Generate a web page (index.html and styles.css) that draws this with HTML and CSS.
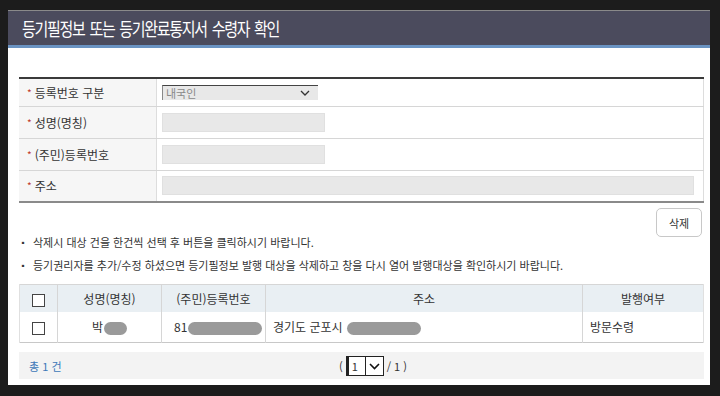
FILE: index.html
```html
<!DOCTYPE html>
<html lang="ko">
<head>
    <meta charset="UTF-8">
    <title>등기필정보 또는 등기완료통지서 수령자 확인</title>
    <link rel="stylesheet" href="styles.css">
</head>
<body>
<div class="popup">
    <header class="popup-title">
        <h1>등기필정보 또는 등기완료통지서 수령자 확인</h1>
    </header>

    <div class="popup-body">
        <table class="form-table">
            <tr>
                <th><span class="req">*</span>등록번호 구분</th>
                <td>
                    <div class="sel">
                        <span class="sel-text">내국인</span>
                        <svg width="10" height="6" viewBox="0 0 10 6"><path d="M1 1 L5 5 L9 1" fill="none" stroke="#333" stroke-width="1.3"/></svg>
                    </div>
                </td>
            </tr>
            <tr>
                <th><span class="req">*</span>성명(명칭)</th>
                <td><div class="field"></div></td>
            </tr>
            <tr>
                <th><span class="req">*</span>(주민)등록번호</th>
                <td><div class="field"></div></td>
            </tr>
            <tr>
                <th><span class="req">*</span>주소</th>
                <td><div class="field wide"></div></td>
            </tr>
        </table>

        <div class="btn-row">
            <button class="btn">삭제</button>
        </div>

        <ul class="notes">
            <li>삭제시 대상 건을 한건씩 선택 후 버튼을 클릭하시기 바랍니다.</li>
            <li>등기권리자를 추가/수정 하셨으면 등기필정보 발행 대상을 삭제하고 창을 다시 열어 발행대상을 확인하시기 바랍니다.</li>
        </ul>

        <table class="list-table">
            <colgroup>
                <col style="width:38px">
                <col style="width:104px">
                <col style="width:104px">
                <col style="width:317px">
                <col>
            </colgroup>
            <tr>
                <th class="c-chk"><span class="chk"></span></th>
                <th>성명(명칭)</th>
                <th>(주민)등록번호</th>
                <th>주소</th>
                <th>발행여부</th>
            </tr>
            <tr>
                <td class="c-chk"><span class="chk"></span></td>
                <td class="center">박<span class="blur" style="width:23px"></span></td>
                <td>81<span class="blur" style="width:74px"></span></td>
                <td class="tight">경기도 군포시 <span class="blur" style="width:74px"></span></td>
                <td class="tight">방문수령</td>
            </tr>
        </table>

        <div class="list-foot">
            <span class="total">총 1 건</span>
            <div class="pager">
                <span>(</span>
                <span class="page-sel"><span class="page-num">1</span><span class="page-arrow"><svg width="11" height="7" viewBox="0 0 11 7"><path d="M1 1 L5.5 5.5 L10 1" fill="none" stroke="#111" stroke-width="1.6"/></svg></span></span>
                <span>/ 1 )</span>
            </div>
        </div>
    </div>
</div>
</body>
</html>
```

FILE: styles.css
```css
body {
    margin: 0;
    background-color: #1c1c1c;
    font-family: "Noto Sans CJK KR", "Noto Sans", sans-serif;
    color: #333;
    height: 396px;
    overflow: hidden;
}
.popup {
    margin: 10px 0 0 8px;
    width: 702px;
    height: 375px;
    background-color: #fff;
    border-top: 1px solid #8a8a8a;
    box-sizing: border-box;
}
.popup-title {
    background-color: #4b4b5d;
    height: 34px;
    border-bottom: 3px solid #6a93c2;
    display: flex;
    align-items: center;
    padding-left: 14px;
}
.popup-title h1 {
    margin: 0;
    color: #fff;
    font-size: 15px;
    font-weight: normal;
    letter-spacing: -1.3px;
    word-spacing: 2px;
    transform: scaleY(1.2);
    transform-origin: left center;
}
.popup-body {
    padding: 29px 6px 0 11px;
}
.form-table {
    width: 685px;
    border-collapse: collapse;
    border-top: 2px solid #3a3a3a;
    border-bottom: 2px solid #8a8a8a;
    border-right: 1px solid #ddd;
    font-size: 12px;
}
.form-table th {
    width: 129px;
    background-color: #f6f6f6;
    text-align: left;
    font-weight: normal;
    padding: 0 0 0 8px;
    border-right: 1px solid #ddd;
    border-bottom: 1px solid #d6d6d6;
    color: #333;
}
.form-table td {
    padding: 0 0 0 5px;
    border-bottom: 1px solid #d6d6d6;
}
.form-table tr {
    height: 32px;
}
.form-table tr:first-child {
    height: 28px;
}
.req {
    color: #c0392b;
    font-size: 10px;
    margin-right: 3px;
    vertical-align: 1px;
}
.sel {
    width: 156px;
    height: 15px;
    background-color: #e8e8e8;
    border-top: 1px solid #444;
    border-left: 1px solid #888;
    display: flex;
    align-items: center;
    justify-content: space-between;
    padding: 0 8px 0 3px;
    box-sizing: border-box;
    font-size: 11px;
    color: #888;
}
.field {
    width: 163px;
    height: 19px;
    background-color: #e8e8e8;
    border: 1px solid #e0e0e0;
    box-sizing: border-box;
}
.field.wide {
    width: 532px;
}
.btn-row {
    display: flex;
    justify-content: flex-end;
    padding: 5px 2px 0 0;
}
.btn {
    width: 46px;
    height: 29px;
    background-color: #fff;
    border: 1px solid #c8c8c8;
    border-radius: 5px;
    font-family: inherit;
    font-size: 11px;
    color: #333;
}
.notes {
    list-style: none;
    margin: -6px 0 0 0;
    padding: 0;
    font-size: 11px;
    color: #333;
}
.notes li {
    line-height: 22px;
}
.notes li::before {
    content: "▪";
    margin-right: 6px;
    font-size: 8px;
    vertical-align: 1px;
}
.list-table {
    margin-top: 7px;
    width: 685px;
    border-collapse: collapse;
    border-top: 1px solid #d6d6d6;
    border-bottom: 1px solid #c8c8c8;
    font-size: 12px;
    line-height: 16px;
    table-layout: fixed;
}
.list-table th {
    background-color: #e9eff3;
    font-weight: normal;
    height: 27px;
    padding: 0;
    border-right: 1px solid #d6d6d6;
    color: #333;
}
.list-table td {
    height: 30px;
    border-right: 1px solid #d6d6d6;
    padding: 0 6px 0 12px;
    white-space: nowrap;
    overflow: hidden;
}
.list-table td.tight {
    padding-left: 7px;
}
.list-table th:last-child,
.list-table td:last-child {
    border-right: 1px solid #e0e0e0;
}
.list-table th:first-child,
.list-table td:first-child {
    border-left: 1px solid #e0e0e0;
}
.list-table td.center {
    text-align: center;
    padding: 0;
}
.list-table .c-chk {
    padding: 0;
    text-align: center;
}
.chk {
    display: inline-block;
    width: 11px;
    height: 11px;
    border: 1px solid #444;
    background-color: #fff;
    vertical-align: middle;
}
.blur {
    display: inline-block;
    height: 13px;
    border-radius: 7px;
    background-color: #9a9a9a;
    vertical-align: middle;
    margin-left: 1px;
}
.list-foot {
    margin-top: 9px;
    width: 685px;
    height: 27px;
    background-color: #f3f3f3;
    position: relative;
    display: flex;
    align-items: center;
    font-size: 11px;
}
.total {
    color: #3d78b8;
    padding-left: 10px;
}
.pager {
    position: absolute;
    left: 320px;
    top: 4px;
    display: flex;
    align-items: center;
    gap: 3px;
    color: #333;
}
.page-sel {
    display: flex;
    height: 18px;
    border: 1px solid #222;
    background-color: #fff;
}
.page-num {
    width: 13px;
    border-left: 2px solid #222;
    padding-left: 3px;
    line-height: 18px;
}
.page-arrow {
    width: 17px;
    border-left: 1px solid #222;
    display: flex;
    align-items: center;
    justify-content: center;
}
```
